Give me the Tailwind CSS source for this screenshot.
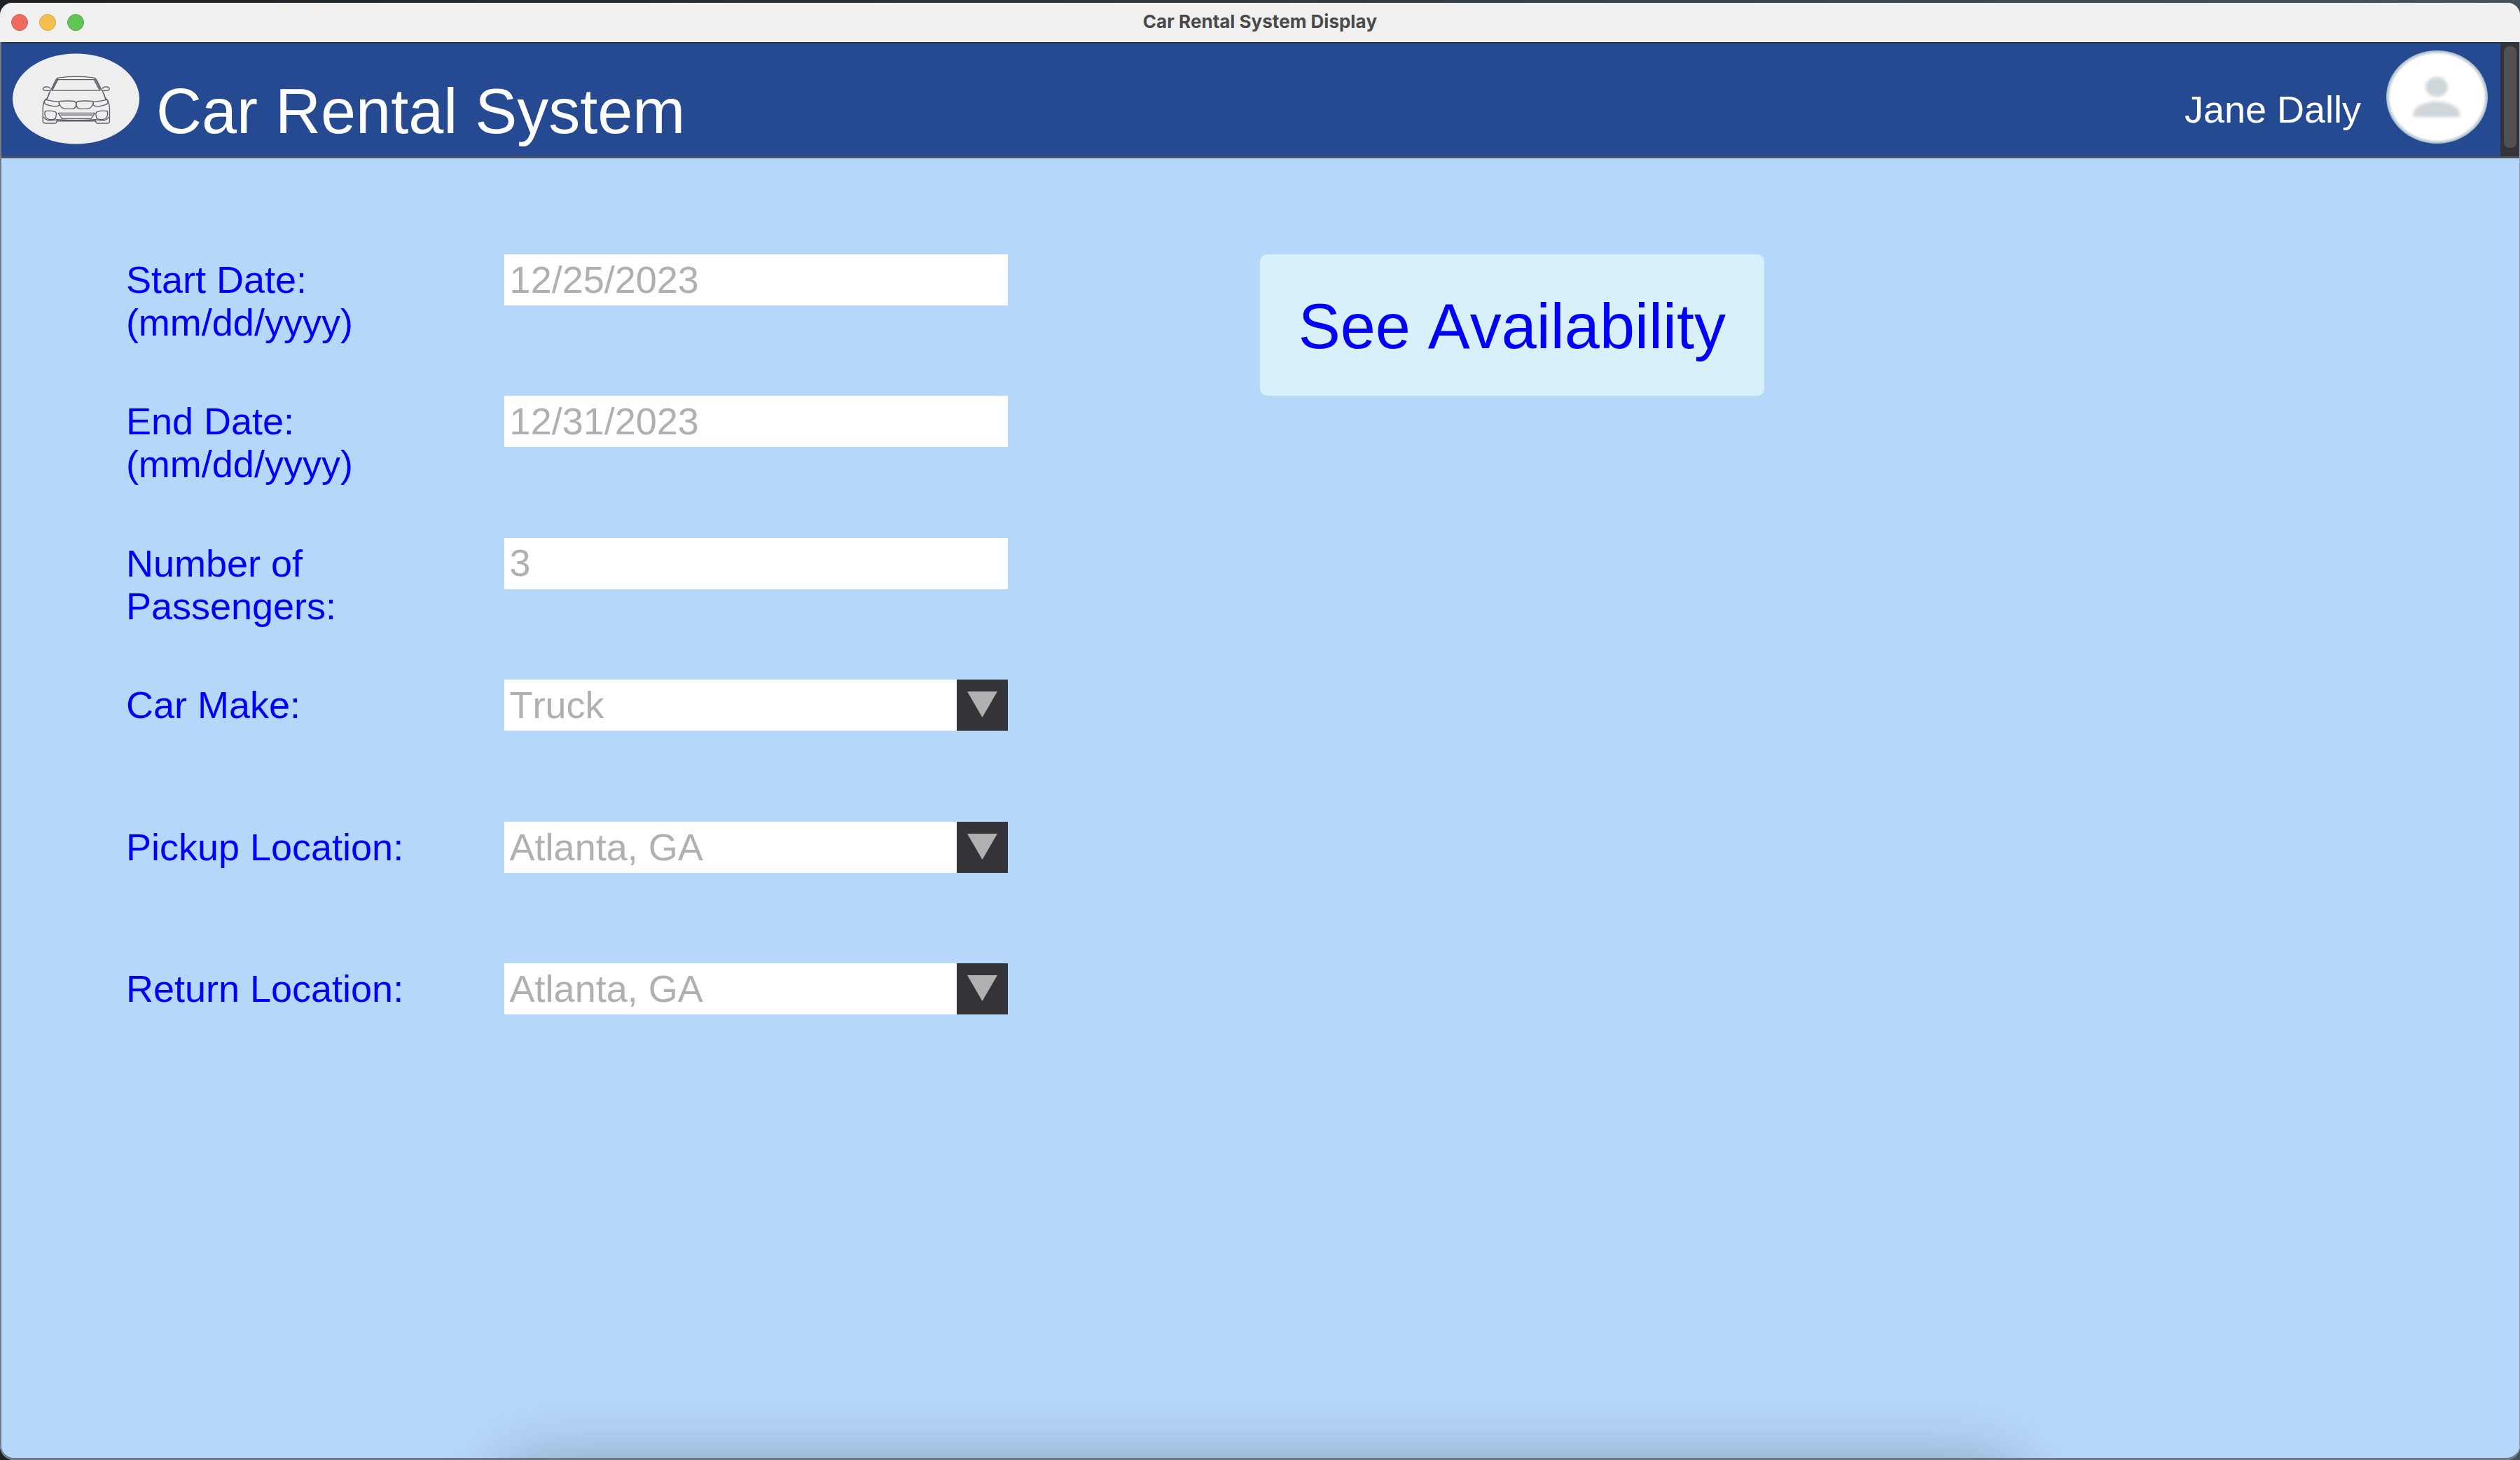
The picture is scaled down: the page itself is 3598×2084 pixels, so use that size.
<!DOCTYPE html>
<html lang="en">
<head>
<meta charset="utf-8">
<meta name="viewport" content="width=device-width, initial-scale=1">
<title>Car Rental System Display</title>
<script src="https://cdn.jsdelivr.net/npm/@tailwindcss/browser@4"></script>
</head>
<body class="bg-linear-to-r from-[#1c2226] to-[#48525a] font-['Liberation_Sans',Arial,sans-serif] [font-kerning:none]">
<div class="flex min-h-screen flex-col pt-1">
  <div class="relative flex flex-1 flex-col overflow-hidden rounded-t-[18px] rounded-b-[20px] bg-[#b5d7fa]">

    <!-- Window title bar -->
    <div class="grid h-14 grid-cols-3 items-center bg-[#f0f0f0] px-4">
      <div class="flex gap-4">
        <button aria-label="Close" class="size-6 rounded-full border border-[#d9584f] bg-[#ec6a5e]"></button>
        <button aria-label="Minimize" class="size-6 rounded-full border border-[#d9a63f] bg-[#f4bf4f]"></button>
        <button aria-label="Zoom" class="size-6 rounded-full border border-[#4dab3e] bg-[#61c554]"></button>
      </div>
      <p class="pb-0.5 text-center font-['Inter',sans-serif] text-[26px] leading-8 font-bold text-[#4a4a4a]">Car Rental System Display</p>
    </div>

    <!-- App header -->
    <header class="flex h-[166px] items-stretch border-t-2 border-b-3 border-t-[#2c3640] border-b-[#4a535d] bg-[#254a91]">
      <div class="flex flex-1 items-center pr-[18px] pl-[18px]">
        <svg class="-mt-1 h-[130px] w-[181px]" viewBox="52 231 545 389" fill="none" stroke="#5a5f68" stroke-width="4" stroke-linejoin="round" aria-hidden="true">
          <ellipse cx="324.500" cy="425.500" rx="272.500" ry="194.500" fill="#eeeeee" stroke="none"/>
          <path d="M199 430 209 402 219 384 236 347Q241 337 252 335Q325 326 399 335Q409 337 414 346L433 384 443 402 453 430"/>
          <path d="M247 343H402L427 390H222Z"/>
          <path d="M246 337 220 388M404 337 431 388"/>
          <path d="M214 389Q206 392 193 390Q182 388 183 382Q184 375 197 374Q210 374 215 382M437 389Q446 392 459 390Q469 388 468 382Q467 375 455 374Q442 374 437 382"/>
          <path d="M209 402Q207 418 196 427Q183 440 182 465V522Q183 531 192 531H234Q241 531 242 521H409Q410 531 418 531H460Q468 531 469 522V465Q468 440 455 427Q446 418 444 402"/>
          <path d="M192 429Q220 436 250 438L254 452Q246 459 230 458L202 452Q188 449 188 436ZM459 429Q430 436 401 438L397 452Q405 459 421 458L449 452Q462 449 462 436Z"/>
          <path d="M256 436Q290 433 317 436Q325 438 325 450Q324 466 312 469H280Q262 467 255 452Q248 439 256 436ZM395 436Q361 433 334 436Q326 438 326 450Q327 466 339 469H371Q389 467 396 452Q403 439 395 436Z"/>
          <path d="M248 487H406L390 511H264ZM258 495H396"/>
          <path d="M192 479Q213 474 233 481Q241 483 240 493L237 508Q233 515 220 515Q203 515 197 508Q187 495 192 479ZM459 479Q438 474 418 481Q409 483 410 493L413 508Q418 515 431 515Q448 515 454 508Q464 495 459 479Z"/>
          <path d="M185 503Q192 516 210 519L243 515Q325 521 408 515L441 519Q459 516 466 503"/>
        </svg>
        <h1 class="mt-8 ml-6 text-[90px] leading-[104px] text-white">Car Rental System</h1>
        <p class="mt-7 ml-auto text-[54px] leading-[61px] text-white">Jane Dally</p>
        <svg class="-mt-2 ml-9 h-[133px] w-[145px]" viewBox="0 0 145 133" role="img" aria-label="Jane Dally">
          <defs>
            <radialGradient id="rim"><stop offset="0.910" stop-color="#fff"/><stop offset="1" stop-color="#9fb6c4"/></radialGradient>
            <filter id="soft"><feGaussianBlur stdDeviation="2"/></filter>
          </defs>
          <ellipse cx="72.500" cy="66.500" rx="72.500" ry="66.500" fill="url(#rim)"/>
          <g fill="#cfd6da" filter="url(#soft)">
            <ellipse cx="72" cy="52" rx="16" ry="14"/>
            <path d="M39 95V89C40 79 58 73 72 73S103 79 105 89V95Z"/>
          </g>
        </svg>
      </div>
      <div class="w-7 bg-[#333338] px-[5px] pt-1 pb-3"><div class="h-full rounded-lg bg-[#525255]"></div></div>
    </header>

    <!-- Reservation form -->
    <form class="grid flex-1 grid-cols-20 grid-rows-[repeat(8,2fr)_1fr] pt-[137px] text-[54px] leading-[61px] text-[#0000fa]">
      <label for="start" class="col-span-3 col-start-2 row-start-1 pt-[6px]">Start Date:<br>(mm/dd/yyyy)</label>
      <input id="start" type="text" value="12/25/2023" class="col-span-4 col-start-5 row-start-1 h-[73px] w-full self-start bg-white px-2 pb-0.5 text-[#b0b0b0]">

      <label for="end" class="col-span-3 col-start-2 row-start-2 pt-[6px]">End Date:<br>(mm/dd/yyyy)</label>
      <input id="end" type="text" value="12/31/2023" class="col-span-4 col-start-5 row-start-2 h-[73px] w-full self-start bg-white px-2 pb-0.5 text-[#b0b0b0]">

      <label for="passengers" class="col-span-3 col-start-2 row-start-3 pt-[6px]">Number of<br>Passengers:</label>
      <input id="passengers" type="text" value="3" class="col-span-4 col-start-5 row-start-3 h-[73px] w-full self-start bg-white px-2 pb-0.5 text-[#b0b0b0]">

      <label for="make" class="col-span-3 col-start-2 row-start-4 pt-[6px]">Car Make:</label>
      <div class="relative col-span-4 col-start-5 row-start-4 h-[73px]">
        <select id="make" class="h-full w-full appearance-none bg-white px-2 text-[#b0b0b0]"><option>Truck</option></select>
        <svg class="pointer-events-none absolute top-0 right-0 size-[73px] bg-[#343338]" viewBox="0 0 73 73" aria-hidden="true"><path d="M15 17H58L36.500 54Z" fill="#b0b0b0"/></svg>
      </div>

      <label for="pickup" class="col-span-3 col-start-2 row-start-5 pt-[6px]">Pickup Location:</label>
      <div class="relative col-span-4 col-start-5 row-start-5 h-[73px]">
        <select id="pickup" class="h-full w-full appearance-none bg-white px-2 text-[#b0b0b0]"><option>Atlanta, GA</option></select>
        <svg class="pointer-events-none absolute top-0 right-0 size-[73px] bg-[#343338]" viewBox="0 0 73 73" aria-hidden="true"><path d="M15 17H58L36.500 54Z" fill="#b0b0b0"/></svg>
      </div>

      <label for="return" class="col-span-3 col-start-2 row-start-6 pt-[6px]">Return Location:</label>
      <div class="relative col-span-4 col-start-5 row-start-6 h-[73px]">
        <select id="return" class="h-full w-full appearance-none bg-white px-2 text-[#b0b0b0]"><option>Atlanta, GA</option></select>
        <svg class="pointer-events-none absolute top-0 right-0 size-[73px] bg-[#343338]" viewBox="0 0 73 73" aria-hidden="true"><path d="M15 17H58L36.500 54Z" fill="#b0b0b0"/></svg>
      </div>

      <button type="submit" class="col-span-4 col-start-11 row-start-1 rounded-[10px] bg-[#d7f0fa] pt-1 text-[90px] leading-[104px]">See Availability</button>
    </form>

    <!-- Shadow cast from below the window -->
    <div class="pointer-events-none absolute top-full right-[20%] left-[20%] h-40 rounded-[40px] shadow-[0_12px_100px_rgb(0_0_0/0.32)]"></div>
    <!-- Window outline -->
    <div class="pointer-events-none absolute inset-x-0 top-14 bottom-0 rounded-b-[20px] border-r border-b-3 border-l-2 border-r-[#8fa3b8] border-b-[#6b7680] border-l-[#757b84]"></div>
  </div>
</div>
</body>
</html>
